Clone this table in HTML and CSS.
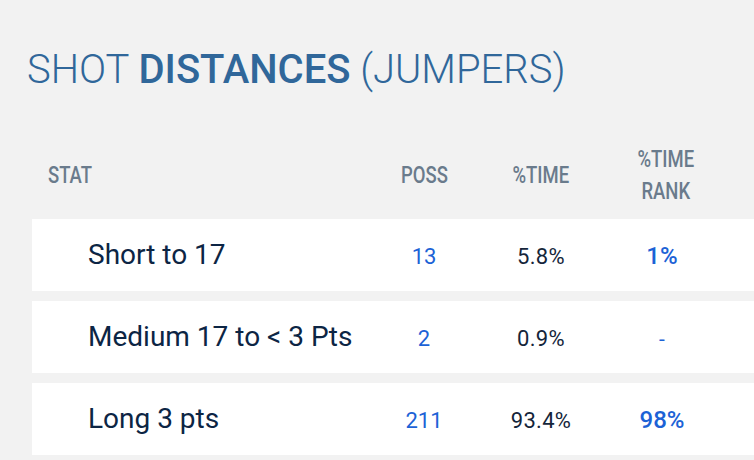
FILE: index.html
```html
<!DOCTYPE html>
<html>
<head>
<meta charset="utf-8">
<link rel="stylesheet" href="styles.css">
</head>
<body>
<div class="page">
  <h1 class="title"><span class="light">SHOT</span> <span class="strong">DISTANCES</span> <span class="light">(JUMPERS)</span></h1>
  <div class="table">
    <div class="head">
      <div class="hcell left"><span class="cond">STAT</span></div>
      <div class="hcell"><span class="cond">POSS</span></div>
      <div class="hcell"><span class="cond">%TIME</span></div>
      <div class="hcell"><span class="cond">%TIME<br>RANK</span></div>
    </div>
    <div class="row">
      <div class="label">Short to 17</div>
      <div class="num link">13</div>
      <div class="num">5.8%</div>
      <div class="rank">1%</div>
    </div>
    <div class="row">
      <div class="label">Medium 17 to &lt; 3 Pts</div>
      <div class="num link">2</div>
      <div class="num">0.9%</div>
      <div class="rank dash">-</div>
    </div>
    <div class="row">
      <div class="label">Long 3 pts</div>
      <div class="num link">211</div>
      <div class="num">93.4%</div>
      <div class="rank">98%</div>
    </div>
  </div>
</div>
</body>
</html>
```

FILE: styles.css
```css
html, body {
  margin: 0;
  padding: 0;
  overflow: hidden;
}
body {
  background: #f2f2f2;
  font-family: Roboto, "Noto Sans", sans-serif;
  width: 754px;
  height: 460px;
}
.page {
  padding-top: 46px;
}
.title {
  margin: 0 0 0 27px;
  font-size: 40px;
  line-height: 48px;
  color: #30679a;
  font-weight: 300;
  white-space: nowrap;
}
.title .strong {
  font-weight: 500;
}
.table {
  margin: 49px 0 0 32px;
  display: flex;
  flex-direction: column;
  gap: 10px;
}
.head {
  display: grid;
  grid-template-columns: 342px 100px 134px 116px 1fr;
  align-items: center;
  height: 64px;
  margin-bottom: 2px;
  color: #6a7b8c;
  font-size: 24px;
  line-height: 32px;
  font-weight: 500;
}
.hcell {
  text-align: center;
}
.hcell.left {
  text-align: left;
  padding-left: 16px;
}
.cond {
  display: inline-block;
  transform: scaleX(0.77);
  transform-origin: center;
}
.left .cond {
  transform-origin: left center;
}
.row {
  display: grid;
  grid-template-columns: 342px 100px 134px 116px 1fr;
  align-items: baseline;
  height: 72px;
  box-sizing: border-box;
  padding-top: 19px;
  background: #ffffff;
}
.label {
  padding-left: 56px;
  font-size: 28px;
  line-height: 33px;
  color: #0c2544;
}
.num {
  text-align: center;
  font-size: 22px;
  color: #14253a;
  letter-spacing: 0.3px;
}
.num.link {
  color: #1c62d6;
  letter-spacing: 0;
}
.rank {
  text-align: center;
  font-size: 24px;
  font-weight: 500;
  color: #1c62d6;
  padding-right: 8px;
}
.rank.dash {
  font-size: 21px;
  font-weight: 400;
}
```
